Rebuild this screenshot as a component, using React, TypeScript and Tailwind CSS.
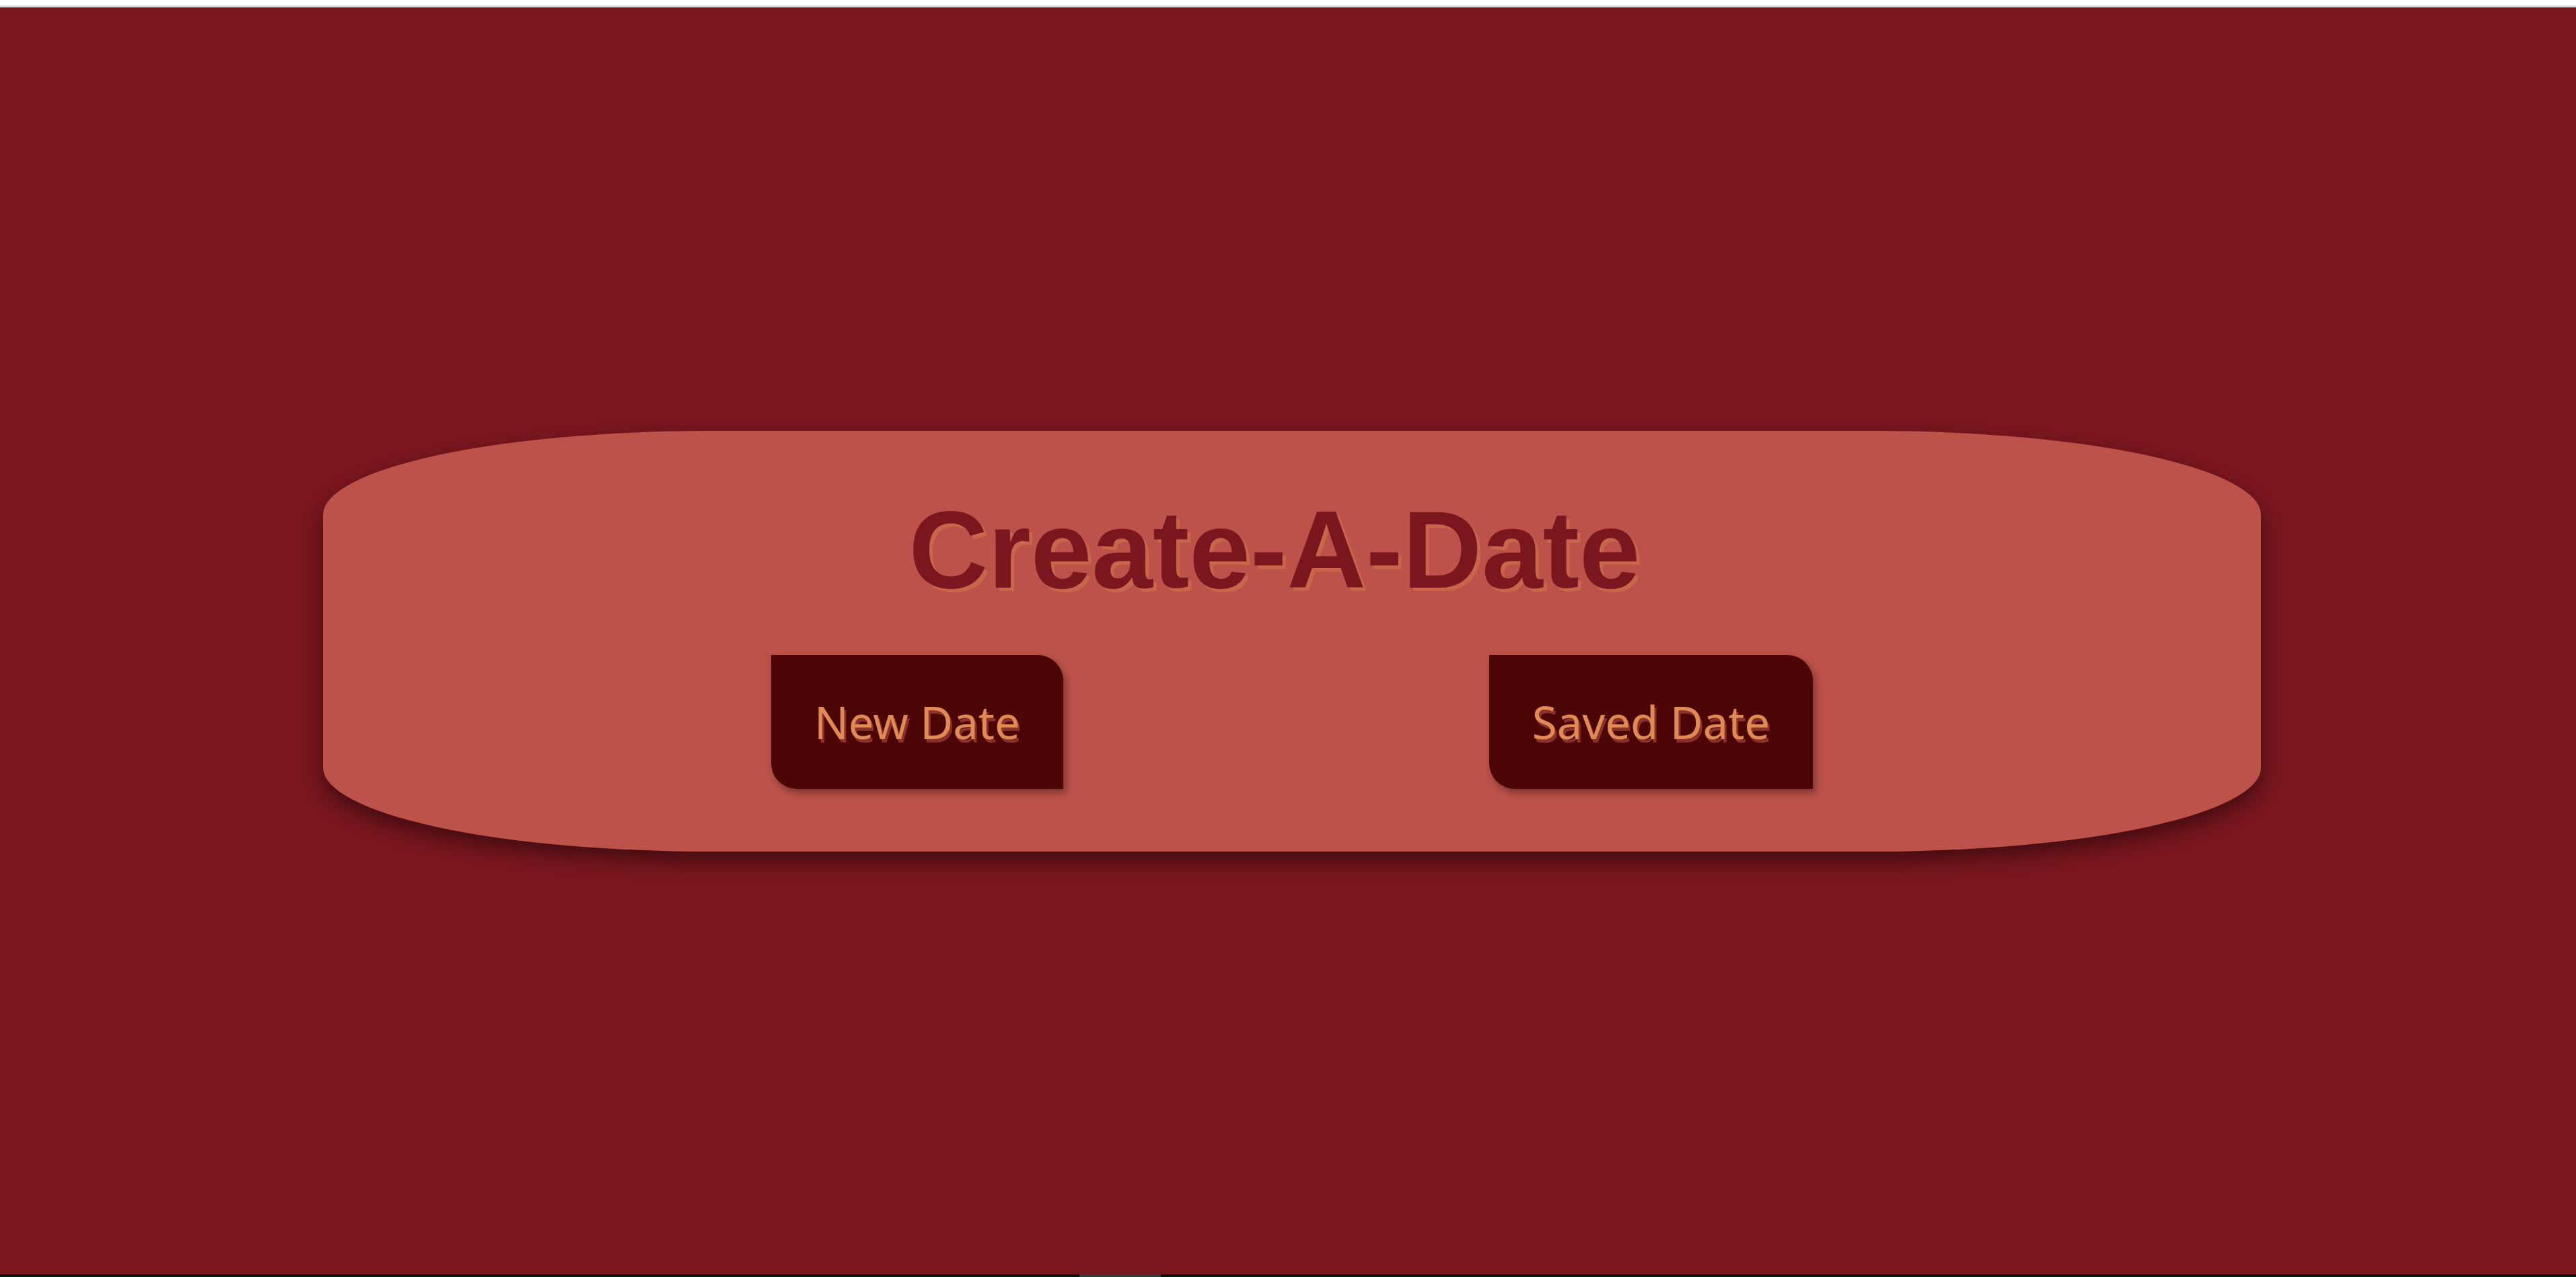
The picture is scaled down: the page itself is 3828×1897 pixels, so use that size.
const DateButton = ({ label }: { label: string }) => {
  return (
    <button className="h-[199px] px-[64px] bg-[#4c0606] rounded-tr-[38px] rounded-bl-[38px] shadow-[4px_6px_12px_rgba(0,0,0,0.35)] text-[67px] text-[#e08a55] [text-shadow:3px_5px_0_#8b302c] font-['Noto_Sans',sans-serif] cursor-pointer">
      {label}
    </button>
  );
};

const App = () => {
  return (
    <div className="flex flex-col w-full h-[1897px] overflow-hidden">
      <div className="h-[8px] bg-white" />
      <div className="h-[3px] bg-[#dadada]" />
      <main className="h-[1882px] bg-[#7a161e] flex items-center justify-center">
        <div className="w-[2880px] ml-[12px] rounded-[20%] bg-[#bd524a] shadow-[0_14px_30px_rgba(0,0,0,0.45)] py-[93px] flex flex-col items-center">
          <h1 className="text-[163px] leading-none font-bold text-[#7a161e] [text-shadow:5px_5px_0_#c9654b] font-['Liberation_Sans',Arial,sans-serif] mr-[52px] pt-[2px]">
            Create-A-Date
          </h1>
          <div className="mt-[75px] flex justify-center gap-[633px]">
            <DateButton label="New Date" />
            <DateButton label="Saved Date" />
          </div>
        </div>
      </main>
      <div className="h-[4px] bg-[#111111] flex">
        <div className="ml-[1604px] w-[121px] bg-[#3a3a3a]" />
      </div>
    </div>
  );
};

export default App;
